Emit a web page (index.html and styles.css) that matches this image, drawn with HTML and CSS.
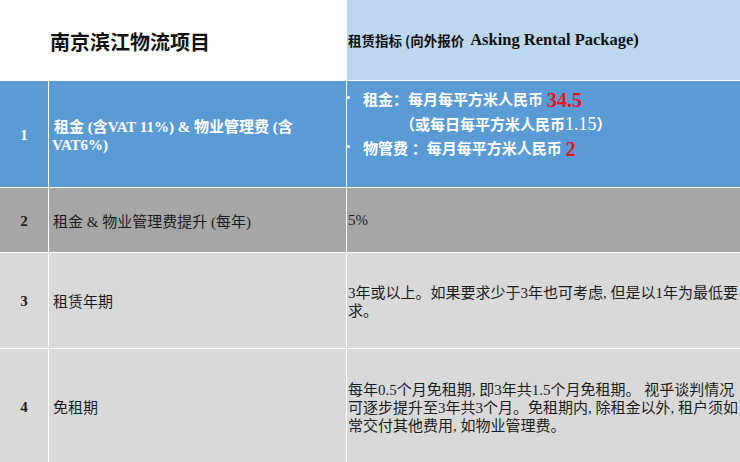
FILE: index.html
```html
<!DOCTYPE html>
<html lang="zh-CN">
<head>
<meta charset="utf-8">
<title>南京滨江物流项目</title>
<link rel="stylesheet" href="styles.css">
</head>
<body>
<div class="sheet">
  <div class="head-left">南京滨江物流项目</div>
  <div class="head-right">租赁指标 (向外报价 <span class="lat">Asking Rental Package)</span></div>

  <div class="num r1">1</div>
  <div class="label r1 strong"><div class="lines"><span class="ind">租金 (含VAT 11%) &amp; 物业管理费 (含</span><br>VAT6%)</div></div>
  <div class="detail r1 strong">
    <div class="bl"><span class="dot"></span>租金：每月每平方米人民币 <span class="red">34.5</span></div>
    <div class="cont">（或每日每平方米人民币<span class="lite">1.15</span>）</div>
    <div class="bl"><span class="dot"></span>物管费 ：每月每平方米人民币 <span class="red">2</span></div>
  </div>

  <div class="num r2">2</div>
  <div class="label r2">租金 &amp; 物业管理费提升 (每年)</div>
  <div class="detail r2 mid">5%</div>

  <div class="num r3">3</div>
  <div class="label r3">租赁年期</div>
  <div class="detail r3 mid"><div class="para">3年或以上。如果要求少于3年也可考虑, 但是以1年为最低要<br>求。</div></div>

  <div class="num r3">4</div>
  <div class="label r3">免租期</div>
  <div class="detail r3 mid"><div class="para">每年0.5个月免租期, 即3年共1.5个月免租期。 视乎谈判情况<br>可逐步提升至3年共3个月。免租期内, 除租金以外, 租户须如<br>常交付其他费用, 如物业管理费。</div></div>
</div>
</body>
</html>
```

FILE: styles.css
```css
html, body {
  margin: 0;
  padding: 0;
  background: #ffffff;
}

body {
  width: 740px;
  height: 462px;
  overflow: hidden;
  font-family: "Liberation Serif", "Noto Sans CJK SC", serif;
  color: #1c1c1c;
}

.sheet {
  display: grid;
  grid-template-columns: 48px 297px 1fr;
  grid-template-rows: 80px 106px 64px 95px 114px;
  gap: 1px;
  background: #ffffff;
  width: 740px;
  height: 462px;
}

.head-left {
  grid-column: 1 / 3;
  background: #ffffff;
  display: flex;
  align-items: center;
  padding-left: 50px;
  padding-top: 3px;
  font-family: "Noto Sans CJK SC", sans-serif;
  font-weight: 700;
  font-size: 20px;
  color: #111111;
}

.head-right {
  background: #bdd7ee;
  display: flex;
  align-items: center;
  padding-left: 1px;
  font-family: "Noto Sans CJK SC", sans-serif;
  font-weight: 700;
  font-size: 13.5px;
  color: #111111;
  white-space: nowrap;
}

.lat {
  font-family: "Liberation Serif", serif;
  font-size: 16.5px;
  margin-left: 6px;
}

.r1 { background: #5b9bd5; color: #ffffff; }
.r2 { background: #a6a6a6; }
.r3 { background: #d9d9d9; }

.num {
  display: flex;
  align-items: center;
  justify-content: center;
  font-weight: 700;
  font-size: 15px;
  padding-top: 2px;
}

.label {
  display: flex;
  align-items: center;
  padding-left: 4px;
  font-size: 15px;
  white-space: nowrap;
}

.strong { font-weight: 700; }

.lines {
  line-height: 17.5px;
  padding-top: 5px;
  margin-left: -1px;
}

.ind { padding-left: 2px; }

.detail {
  font-size: 15px;
  white-space: nowrap;
}

.mid {
  display: flex;
  align-items: center;
  padding-left: 1px;
}

.para {
  line-height: 18px;
  padding-top: 3px;
}

.r1.detail {
  padding-top: 7px;
  line-height: 24px;
}

.bl {
  display: flex;
  align-items: center;
}

.dot {
  width: 3px;
  height: 3px;
  background: #ffffff;
  border-radius: 50%;
  margin-left: 0;
  margin-right: 13px;
  margin-top: -6px;
}

.cont { padding-left: 53px; }

.red {
  color: #e3141b;
  font-size: 20px;
  margin-left: 4px;
}

.lite {
  font-weight: 400;
  font-size: 18px;
}
```
